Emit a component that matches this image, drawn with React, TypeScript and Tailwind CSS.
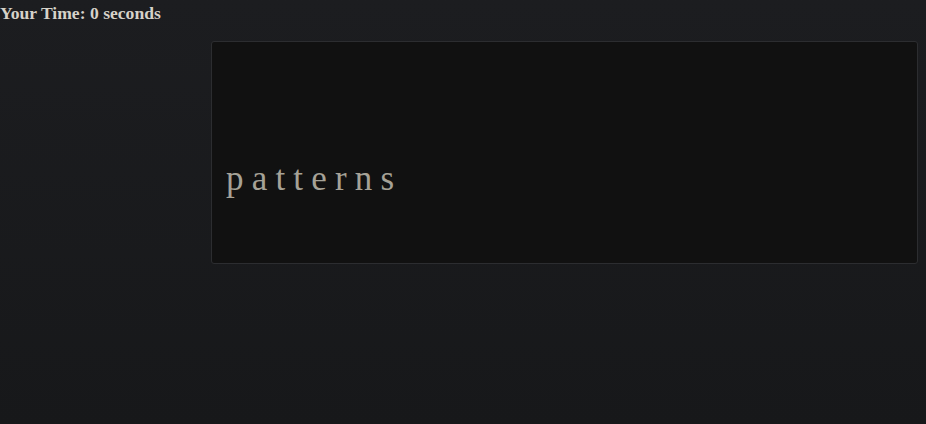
export default function App() {
  return (
    <div className="min-h-[424px] w-full bg-gradient-to-b from-[#1c1d20] to-[#17181a] font-['Liberation_Serif',serif]">
      <div className="text-[17.6px] font-bold leading-[26px] text-[#d6d2c9]">Your Time: 0 seconds</div>
      <div className="ml-[211px] mr-[8px] mt-[15px] flex h-[223px] items-center rounded-[3px] border border-[#2c2d30] bg-[#111111] pl-[14px] pt-[54px]">
        <span className="text-[35px] tracking-[8.2px] text-[#a6a297]">patterns</span>
      </div>
    </div>
  );
}
